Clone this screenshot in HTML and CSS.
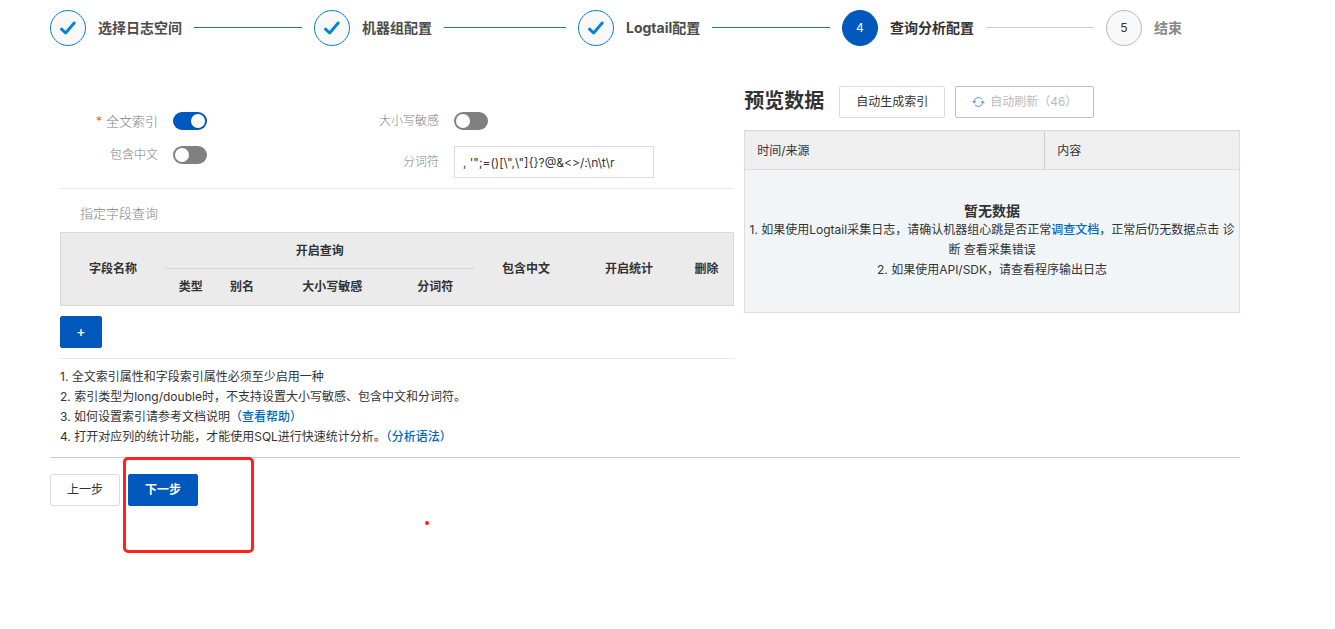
FILE: index.html
```html
<!DOCTYPE html>
<html lang="zh-CN">
<head>
<meta charset="utf-8">
<meta name="viewport" content="width=device-width, initial-scale=1">
<title>查询分析配置</title>
<link rel="stylesheet" href="styles.css">
</head>
<body>
<main class="page">
  <ol class="steps">
    <li class="step step-done">
      <span class="step-mark"><svg viewBox="0 0 18 16" class="check"><path d="M2.5 9.2 6.6 13 15.2 3"/></svg></span>
      <span class="step-title">选择日志空间</span>
    </li>
    <li class="step step-done">
      <span class="step-mark"><svg viewBox="0 0 18 16" class="check"><path d="M2.5 9.2 6.6 13 15.2 3"/></svg></span>
      <span class="step-title">机器组配置</span>
    </li>
    <li class="step step-done">
      <span class="step-mark"><svg viewBox="0 0 18 16" class="check"><path d="M2.5 9.2 6.6 13 15.2 3"/></svg></span>
      <span class="step-title">Logtail配置</span>
    </li>
    <li class="step step-current">
      <span class="step-mark">4</span>
      <span class="step-title">查询分析配置</span>
    </li>
    <li class="step">
      <span class="step-mark">5</span>
      <span class="step-title">结束</span>
    </li>
  </ol>

  <div class="columns">
    <section class="config">
      <div class="form">
        <div class="form-col">
          <div class="field">
            <label class="label label-large" for="fulltext"><span class="required">*</span> 全文索引</label>
            <input class="switch" type="checkbox" id="fulltext" checked>
          </div>
          <div class="field">
            <label class="label" for="chinese">包含中文</label>
            <input class="switch" type="checkbox" id="chinese">
          </div>
        </div>
        <div class="form-col">
          <div class="field">
            <label class="label" for="case">大小写敏感</label>
            <input class="switch" type="checkbox" id="case">
          </div>
          <div class="field">
            <label class="label" for="token">分词符</label>
            <input class="text-input" type="text" id="token" value=", '&quot;;=()[\&quot;,\&quot;]{}?@&amp;&lt;&gt;/:\n\t\r">
          </div>
        </div>
      </div>

      <div class="fields-section">
        <h2 class="section-title">指定字段查询</h2>
        <table class="fields-table">
          <colgroup>
            <col class="col-name"><col class="col-type"><col class="col-alias"><col class="col-case">
            <col class="col-token"><col class="col-chinese"><col class="col-stat"><col class="col-delete">
          </colgroup>
          <thead>
            <tr>
              <th rowspan="2">字段名称</th>
              <th colspan="4" class="group">开启查询</th>
              <th rowspan="2">包含中文</th>
              <th rowspan="2">开启统计</th>
              <th rowspan="2">删除</th>
            </tr>
            <tr>
              <th>类型</th><th>别名</th><th>大小写敏感</th><th>分词符</th>
            </tr>
          </thead>
        </table>
        <button class="btn btn-primary btn-add" type="button" aria-label="添加字段">+</button>
      </div>

      <div class="notes">
        <p>1. 全文索引属性和字段索引属性必须至少启用一种</p>
        <p>2. 索引类型为long/double时，不支持设置大小写敏感、包含中文和分词符。</p>
        <p>3. 如何设置索引请参考文档说明<a href="#">（查看帮助）</a></p>
        <p>4. 打开对应列的统计功能，才能使用SQL进行快速统计分析。<a href="#">（分析语法）</a></p>
      </div>
    </section>

    <section class="preview">
      <div class="preview-head">
        <h1 class="preview-title">预览数据</h1>
        <button class="btn" type="button">自动生成索引</button>
        <button class="btn btn-refresh" type="button" disabled>
          <svg viewBox="0 0 14 12" class="refresh"><path class="arc" d="M2.4 5.2A4.7 4.7 0 0 1 10.6 2.8M11.6 6.8A4.7 4.7 0 0 1 3.4 9.2"/><path class="tip" d="M0 5h4.8L2.4 8zM9.2 7h4.8L11.6 4z"/></svg>
          <span>自动刷新（46）</span>
        </button>
      </div>
      <table class="preview-table">
        <thead>
          <tr><th class="col-time">时间/来源</th><th>内容</th></tr>
        </thead>
        <tbody>
          <tr>
            <td colspan="2">
              <h3 class="empty-title">暂无数据</h3>
              <p>1. 如果使用Logtail采集日志，请确认机器组心跳是否正常<a href="#">调查文档</a>，正常后仍无数据点击 诊断 查看采集错误</p>
              <p>2. 如果使用API/SDK，请查看程序输出日志</p>
            </td>
          </tr>
        </tbody>
      </table>
    </section>
  </div>

  <footer class="actions">
    <button class="btn" type="button">上一步</button>
    <div class="next">
      <button class="btn btn-primary" type="button">下一步</button>
      <span class="highlight"></span>
      <span class="dot"></span>
    </div>
  </footer>
</main>
</body>
</html>
```

FILE: styles.css
```css
* {
  box-sizing: border-box;
}

body {
  margin: 0;
  background: #fff;
  color: #333;
  font: 12px/20px Inter, "Noto Sans CJK SC", sans-serif;
}

h1, h2, h3, p {
  margin: 0;
}

a {
  color: #0068c0;
  font-weight: 500;
  text-decoration: none;
}

.page {
  padding: 10px 95px 48px 50px;
}

/* Steps */
.steps {
  display: grid;
  grid-template-columns: repeat(4, 264fr) 134fr;
  margin: 0;
  padding: 0;
  list-style: none;
}

.step {
  display: flex;
  align-items: center;
  gap: 12px;
  color: #888;
}

.step:not(:last-child)::after {
  content: "";
  flex: 1;
  height: 1px;
  margin: 0 12px 2px 0;
  background: #ccc;
}

.step-mark {
  display: flex;
  flex: none;
  align-items: center;
  justify-content: center;
  width: 36px;
  height: 36px;
  border: 1px solid #bbb;
  border-radius: 50%;
  background: #f8f8f8;
  color: #333;
}

.step-title {
  font-size: 14px;
  font-weight: 700;
  white-space: nowrap;
}

.step-done {
  color: #4c4c4c;
}

.step-done .step-mark {
  border-color: #0a84d0;
}

.step-done:not(:last-child)::after {
  background: #1878b8;
}

.step-current {
  color: #333;
}

.step-current .step-mark {
  border-color: #0058bc;
  background: #0058bc;
  color: #fff;
}

.check {
  width: 18px;
  height: 16px;
  fill: none;
  stroke: #0a84d0;
  stroke-width: 3;
  stroke-linecap: round;
  stroke-linejoin: round;
}

/* Columns */
.columns {
  display: grid;
  grid-template-columns: 7fr 5fr;
  margin-top: 40px;
  padding-bottom: 10px;
  border-bottom: 1px solid #ccc;
}

.config {
  padding: 0 10px;
}

.form {
  display: grid;
  grid-template-columns: 5fr 7fr;
  padding: 26px 0 10px;
}

.form-col {
  display: flex;
  flex-direction: column;
  gap: 16px;
}

.field {
  display: flex;
  align-items: center;
  gap: 15px;
}

.label {
  width: 98px;
  color: #808080;
  font-weight: 300;
  line-height: 18px;
  text-align: right;
}

.label-large {
  font-size: 13px;
}

.required {
  color: #f04631;
}

.switch {
  appearance: none;
  width: 34px;
  height: 18px;
  margin: 0;
  padding: 2px;
  border-radius: 9px;
  background: #808080;
}

.switch::before {
  content: "";
  display: block;
  width: 14px;
  height: 14px;
  border-radius: 50%;
  background: #fff;
}

.switch:checked {
  background: #0058bc;
}

.switch:checked::before {
  margin-left: auto;
}

.text-input {
  width: 200px;
  height: 32px;
  padding: 0 8px;
  border: 1px solid #ddd;
  background: #fff;
  color: #333;
  font: inherit;
}

.fields-section {
  padding: 14px 0 10px;
  border-top: 1px solid #e8e8e8;
}

.section-title {
  padding: 0 20px;
  margin-bottom: 9px;
  color: #808080;
  font-size: 13px;
  font-weight: 300;
}

.fields-table {
  width: 100%;
  border: 1px solid #d8d8d8;
  border-spacing: 0;
  table-layout: fixed;
  background: #ebebeb;
}

.fields-table th {
  height: 36px;
  padding: 0;
  font-weight: 600;
  line-height: 20px;
}

.fields-table .group {
  border-bottom: 1px solid #d4d4d4;
}

.col-name { width: 15.5%; }
.col-type { width: 7.6%; }
.col-alias { width: 7.7%; }
.col-case { width: 19.1%; }
.col-token { width: 11.6%; }
.col-chinese { width: 15.4%; }
.col-stat { width: 15.2%; }
.col-delete { width: 7.9%; }

/* Buttons */
.btn {
  display: inline-flex;
  align-items: center;
  justify-content: center;
  height: 32px;
  padding: 0 16px;
  border: 1px solid #ddd;
  border-radius: 2px;
  background: #fff;
  color: #333;
  font: inherit;
  white-space: nowrap;
}

.btn-primary {
  border-color: #0058bc;
  background: #0058bc;
  color: #fff;
  font-weight: 600;
}

.btn-add {
  width: 42px;
  margin-top: 10px;
  font-size: 14px;
  font-weight: 500;
}

.btn-refresh {
  gap: 5px;
  border-color: #c0c0c0;
  color: #bbb;
}

.refresh {
  width: 13px;
  height: 12px;
}

.arc {
  fill: none;
  stroke: #6f9fe0;
  stroke-width: 1.2;
}

.tip {
  fill: #6f9fe0;
}

.notes {
  padding-top: 8px;
  border-top: 1px solid #e8e8e8;
}

/* Preview */
.preview-head {
  display: flex;
  align-items: flex-start;
  gap: 10px;
  margin-bottom: 12px;
}

.preview-title {
  margin-right: 5px;
  font-size: 20px;
  line-height: 30px;
}

.preview-table {
  width: 100%;
  border: 1px solid #ddd;
  border-spacing: 0;
  table-layout: fixed;
}

.preview-table th {
  height: 39px;
  padding: 0 12px;
  border-top: 1px solid #e8e8e8;
  border-bottom: 1px solid #ddd;
  background: #efefef;
  font-weight: 400;
  text-align: left;
}

.preview-table .col-time {
  width: 300px;
  border-right: 1px solid #ccc;
}

.preview-table td {
  padding: 31px 4px 32px;
  background: #f1f5f8;
  text-align: center;
}

.empty-title {
  font-size: 14px;
  line-height: 19px;
}

/* Actions */
.actions {
  display: flex;
  gap: 8px;
  padding-top: 16px;
}

.next {
  position: relative;
}

.highlight {
  position: absolute;
  top: -17px;
  left: -5px;
  width: 131px;
  height: 96px;
  border: 3px solid #ff211c;
  border-radius: 5px;
  pointer-events: none;
}

.dot {
  position: absolute;
  top: 47px;
  left: 297px;
  width: 4px;
  height: 4px;
  border-radius: 50%;
  background: #ff211c;
}
```
